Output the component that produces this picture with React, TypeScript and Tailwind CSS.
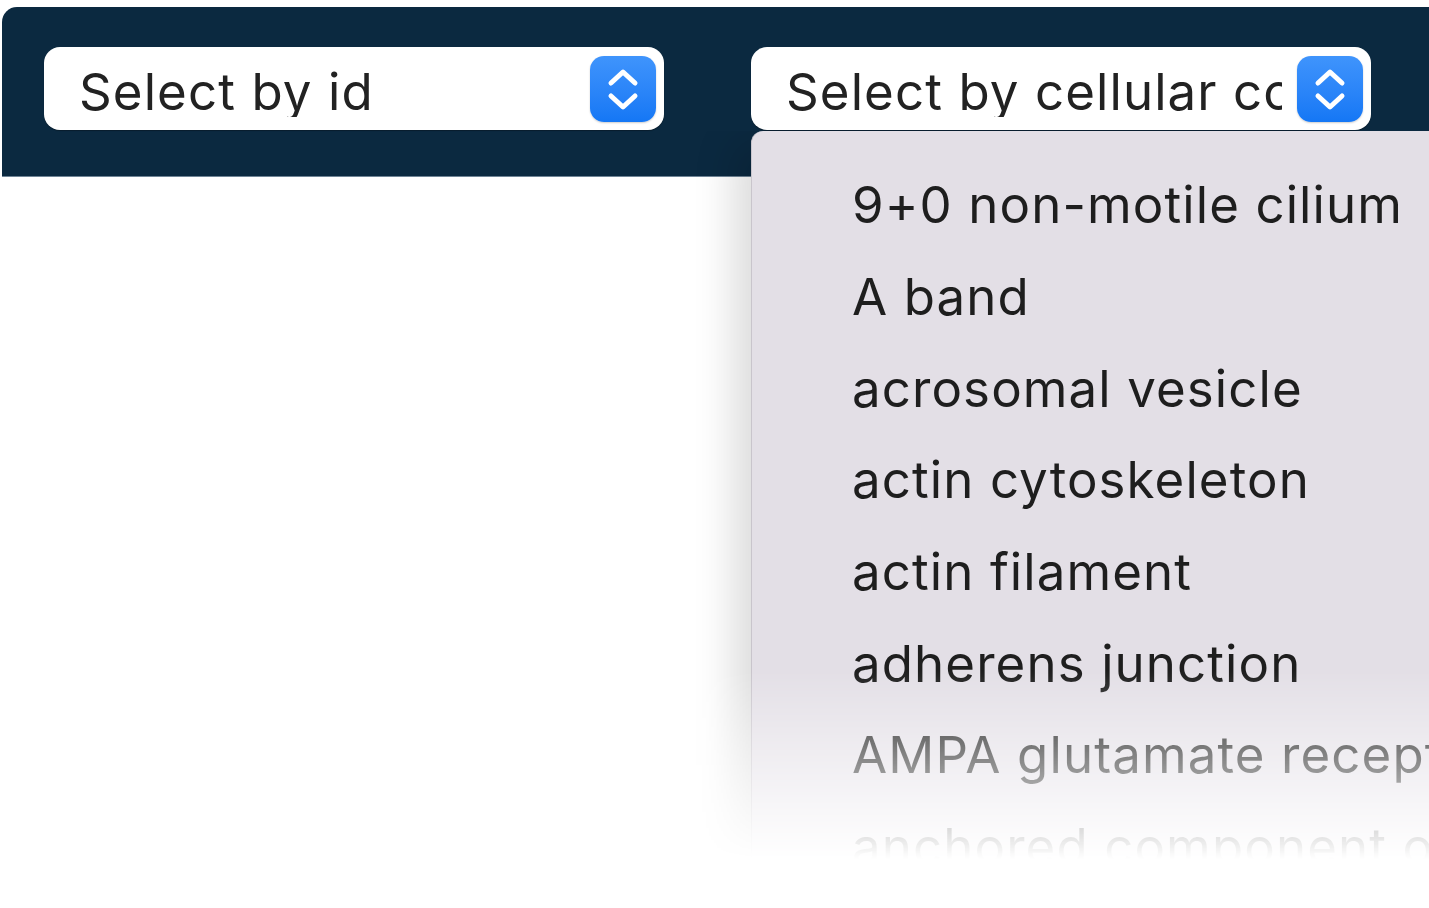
import React from "react";

const items = [
  "9+0 non-motile cilium",
  "A band",
  "acrosomal vesicle",
  "actin cytoskeleton",
  "actin filament",
  "adherens junction",
  "AMPA glutamate receptor complex",
  "anchored component of membrane",
];

function Stepper() {
  return (
    <div className="w-[66px] h-[66px] shrink-0 rounded-[14px] bg-gradient-to-b from-[#3f94fc] to-[#1477f5] shadow-[0_1px_2px_rgba(0,0,0,0.2)] flex items-center justify-center">
      <svg width="66" height="66" viewBox="0 0 66 66" fill="none">
        <path d="M21 27 L33 16 L45 27" stroke="white" strokeWidth="5" strokeLinecap="round" strokeLinejoin="round" />
        <path d="M21 40 L33 51 L45 40" stroke="white" strokeWidth="5" strokeLinecap="round" strokeLinejoin="round" />
      </svg>
    </div>
  );
}

function Select({ label }: { label: string }) {
  return (
    <div className="w-[620px] h-[83px] rounded-[16px] bg-white flex items-center pl-[35px] pr-[8px] shadow-[0_1px_1px_rgba(0,0,0,0.3)]">
      <div className="flex-1 min-w-0 overflow-hidden whitespace-nowrap text-[51px] tracking-[1.1px] leading-none text-[#222] mr-[15px] pt-[5px]">
        {label}
      </div>
      <Stepper />
    </div>
  );
}

export default function App() {
  return (
    <div
      className="relative w-[1429px] h-[908px] bg-white overflow-hidden pt-[7px] pl-[2px]"
      style={{ fontFamily: "Inter, 'Noto Sans', 'Liberation Sans', sans-serif" }}
    >
      <div className="h-[170px] rounded-tl-[15px] bg-[#0b2940] border-b border-[#6f8496] flex items-start gap-[87px] pt-[40px] pl-[42px]">
        <Select label="Select by id" />
        <Select label="Select by cellular component" />
      </div>

      <div className="absolute left-[680px] top-[131px] w-[760px] h-[777px] pl-[71px] [mask-image:linear-gradient(to_bottom,black_0px,black_540px,transparent_728px)]">
        <div className="h-full rounded-tl-[12px] bg-[#e3dfe6] border-l border-[#c9c5cc] shadow-[-18px_10px_40px_rgba(0,0,0,0.14)] pt-[28px] pl-[100px]">
          {items.map((t) => (
            <div key={t} className="h-[91.7px] flex items-center whitespace-nowrap text-[51px] tracking-[1.1px] leading-none text-[#1e1e1e]">
              {t}
            </div>
          ))}
        </div>
      </div>
    </div>
  );
}
